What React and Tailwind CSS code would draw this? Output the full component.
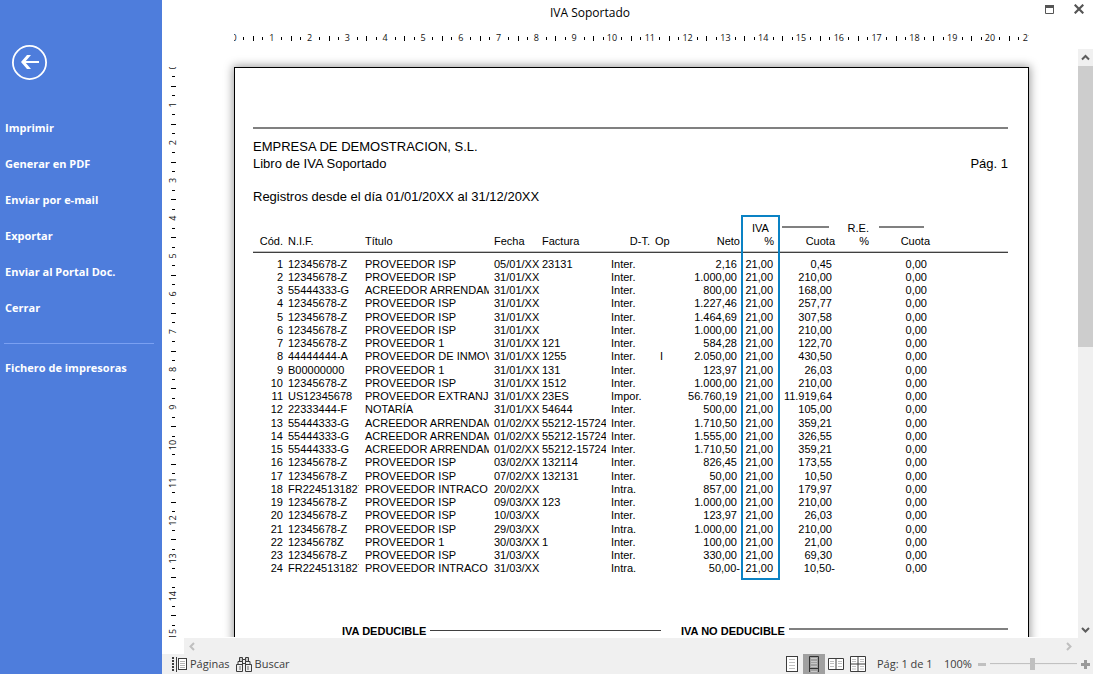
const MENU = ["Imprimir", "Generar en PDF", "Enviar por e-mail", "Exportar", "Enviar al Portal Doc.", "Cerrar"];

// cod, nif, titulo, fecha, factura, tipo, op, neto, iva, cuota, cuota R.E.
const ROWS = [
  ["1", "12345678-Z", "PROVEEDOR ISP", "05/01/XX", "23131", "Inter.", "", "2,16", "21,00", "0,45", "0,00"],
  ["2", "12345678-Z", "PROVEEDOR ISP", "31/01/XX", "", "Inter.", "", "1.000,00", "21,00", "210,00", "0,00"],
  ["3", "55444333-G", "ACREEDOR ARRENDAM", "31/01/XX", "", "Inter.", "", "800,00", "21,00", "168,00", "0,00"],
  ["4", "12345678-Z", "PROVEEDOR ISP", "31/01/XX", "", "Inter.", "", "1.227,46", "21,00", "257,77", "0,00"],
  ["5", "12345678-Z", "PROVEEDOR ISP", "31/01/XX", "", "Inter.", "", "1.464,69", "21,00", "307,58", "0,00"],
  ["6", "12345678-Z", "PROVEEDOR ISP", "31/01/XX", "", "Inter.", "", "1.000,00", "21,00", "210,00", "0,00"],
  ["7", "12345678-Z", "PROVEEDOR 1", "31/01/XX", "121", "Inter.", "", "584,28", "21,00", "122,70", "0,00"],
  ["8", "44444444-A", "PROVEEDOR DE INMOV", "31/01/XX", "1255", "Inter.", "I", "2.050,00", "21,00", "430,50", "0,00"],
  ["9", "B00000000", "PROVEEDOR 1", "31/01/XX", "131", "Inter.", "", "123,97", "21,00", "26,03", "0,00"],
  ["10", "12345678-Z", "PROVEEDOR ISP", "31/01/XX", "1512", "Inter.", "", "1.000,00", "21,00", "210,00", "0,00"],
  ["11", "US12345678", "PROVEEDOR EXTRANJ", "31/01/XX", "23ES", "Impor.", "", "56.760,19", "21,00", "11.919,64", "0,00"],
  ["12", "22333444-F", "NOTARÍA", "31/01/XX", "54644", "Inter.", "", "500,00", "21,00", "105,00", "0,00"],
  ["13", "55444333-G", "ACREEDOR ARRENDAM", "01/02/XX", "55212-15724", "Inter.", "", "1.710,50", "21,00", "359,21", "0,00"],
  ["14", "55444333-G", "ACREEDOR ARRENDAM", "01/02/XX", "55212-15724", "Inter.", "", "1.555,00", "21,00", "326,55", "0,00"],
  ["15", "55444333-G", "ACREEDOR ARRENDAM", "01/02/XX", "55212-15724", "Inter.", "", "1.710,50", "21,00", "359,21", "0,00"],
  ["16", "12345678-Z", "PROVEEDOR ISP", "03/02/XX", "132114", "Inter.", "", "826,45", "21,00", "173,55", "0,00"],
  ["17", "12345678-Z", "PROVEEDOR ISP", "07/02/XX", "132131", "Inter.", "", "50,00", "21,00", "10,50", "0,00"],
  ["18", "FR2245131827", "PROVEEDOR INTRACO", "20/02/XX", "", "Intra.", "", "857,00", "21,00", "179,97", "0,00"],
  ["19", "12345678-Z", "PROVEEDOR ISP", "09/03/XX", "123", "Inter.", "", "1.000,00", "21,00", "210,00", "0,00"],
  ["20", "12345678-Z", "PROVEEDOR ISP", "10/03/XX", "", "Inter.", "", "123,97", "21,00", "26,03", "0,00"],
  ["21", "12345678-Z", "PROVEEDOR ISP", "29/03/XX", "", "Intra.", "", "1.000,00", "21,00", "210,00", "0,00"],
  ["22", "12345678Z", "PROVEEDOR 1", "30/03/XX", "1", "Inter.", "", "100,00", "21,00", "21,00", "0,00"],
  ["23", "12345678-Z", "PROVEEDOR ISP", "31/03/XX", "", "Inter.", "", "330,00", "21,00", "69,30", "0,00"],
  ["24", "FR2245131827", "PROVEEDOR INTRACO", "31/03/XX", "", "Intra.", "", "50,00-", "21,00", "10,50-", "0,00"],
];

const CM = 37.8;

const HorizontalRuler = () => (
  <svg className="block h-4 w-full" aria-hidden="true">
    {Array.from({ length: 22 }, (_, n) => (
      <g key={n}>
        <text x={n * CM} y="11" textAnchor="middle" fontSize="9" fill="#111">{n}</text>
        {[1, 2, 3].map((q) => (
          <rect key={q} x={Math.round((n + q / 4) * CM)} y={q === 2 ? 6 : 7} width="1" height={q === 2 ? 5 : 3} fill="#000" />
        ))}
      </g>
    ))}
  </svg>
);

const VerticalRuler = () => (
  <svg className="block min-h-0 w-full flex-1" aria-hidden="true">
    {Array.from({ length: 16 }, (_, n) => (
      <g key={n}>
        <text transform={`translate(14 ${n * CM}) rotate(-90)`} textAnchor="middle" fontSize="9" fill="#111">{n}</text>
        {[1, 2, 3].map((q) => (
          <rect key={q} x={q === 2 ? 9 : 10} y={Math.round((n + q / 4) * CM)} width={q === 2 ? 5 : 3} height="1" fill="#000" />
        ))}
      </g>
    ))}
  </svg>
);

const Chevron = ({ d, color = "#5c5c5c" }) => (
  <svg className="block" width="9" height="9" viewBox="0 0 9 9" fill="none" stroke={color} strokeWidth="2" aria-hidden="true">
    <path d={d} />
  </svg>
);

const Sidebar = () => (
  <aside className="flex w-[162px] shrink-0 flex-col bg-[#4e7ddc] text-[11px] font-bold text-white">
    <button type="button" aria-label="Volver" className="mt-[45px] ml-3 size-[35px]">
      <svg width="35" height="35" viewBox="0 0 35 35" fill="none" stroke="#fff" aria-hidden="true">
        <circle cx="17.5" cy="17.5" r="16.6" strokeWidth="1.8" />
        <path d="M10.5 17H27" strokeWidth="2" />
        <path d="M9 17L15 10H19L13 17L19 24H15Z" fill="#fff" stroke="none" />
      </svg>
    </button>
    <nav className="mt-[30px] flex flex-col">
      {MENU.map((item) => (
        <button key={item} type="button" className="h-9 px-[5px] text-left">{item}</button>
      ))}
      <hr className="mx-1 mt-[17px] mr-2 mb-[6px] border-[#7aa0f2]" />
      <button type="button" className="h-9 px-[5px] text-left">Fichero de impresoras</button>
    </nav>
  </aside>
);

const Cell = ({ className = "", children }) => (
  <td className={`overflow-hidden p-0 whitespace-nowrap ${className}`}>{children}</td>
);

// a trailing minus hangs to the right of the digits
const netoPad = (value) => (value.endsWith("-") ? "pr-px" : "pr-1");
const cuotaPad = (value) => (value.endsWith("-") ? "pr-0" : "pr-[3px]");

const HEAD = "h-[18px] border-b border-[#404040] p-0 align-top font-normal whitespace-nowrap shadow-[inset_0_-1px_0_#c0c0c0]";

const Register = () => (
  <div className="relative mt-[17px]">
    <table className="w-full table-fixed border-separate border-spacing-0 text-[11px] leading-[13px]">
      <colgroup>
        <col className="w-[35px]" />
        <col className="w-[71px]" />
        <col className="w-[130px]" />
        <col className="w-[51px]" />
        <col className="w-[66px]" />
        <col className="w-[49px]" />
        <col className="w-[20px]" />
        <col className="w-[66px]" />
        <col className="w-[39px]" />
        <col className="w-[55px]" />
        <col className="w-[34px]" />
        <col className="w-[61px]" />
        <col />
      </colgroup>
      <thead>
        <tr className="h-[13px]">
          <td colSpan={8} className="p-0" />
          <th className="p-0 font-normal">IVA</th>
          <td className="p-0 align-top"><div className="mt-1 mr-[6px] ml-[2px] h-[2px] bg-[#808080]" /></td>
          <th className="p-0 text-right font-normal">R.E.</th>
          <td className="p-0 align-top"><div className="mt-1 mr-[6px] ml-[10px] h-[2px] bg-[#808080]" /></td>
          <td className="p-0" />
        </tr>
        <tr>
          <th className={`${HEAD} pr-[5px] text-right`}>Cód.</th>
          <th className={`${HEAD} text-left`}>N.I.F.</th>
          <th className={`${HEAD} pl-[6px] text-left`}>Título</th>
          <th className={`${HEAD} pl-[5px] text-left`}>Fecha</th>
          <th className={`${HEAD} pl-[2px] text-left`}>Factura</th>
          <th className={`${HEAD} pr-[5px] text-right`}>D-T.</th>
          <th className={`${HEAD} text-left`}>Op</th>
          <th className={`${HEAD} pr-px text-right`}>Neto</th>
          <th className={`${HEAD} pr-[6px] text-right`}>%</th>
          <th className={`${HEAD} text-right`}>Cuota</th>
          <th className={`${HEAD} text-right`}>%</th>
          <th className={`${HEAD} text-right`}>Cuota</th>
          <td className={HEAD} />
        </tr>
      </thead>
      <tbody className="before:block before:h-[5px]">
        {ROWS.map(([cod, nif, titulo, fecha, factura, tipo, op, neto, iva, cuota, re]) => (
          <tr key={cod} className="h-[13px] nth-[4n]:h-[14px]">
            <Cell className="pr-[5px] text-right align-top">{cod}</Cell>
            <Cell className="align-top">{nif}</Cell>
            <Cell className="pl-[6px] align-top">{titulo}</Cell>
            <Cell className="pl-[5px] align-top">{fecha}</Cell>
            <Cell className="pl-[2px] align-top">{factura}</Cell>
            <Cell className="pl-[5px] align-top">{tipo}</Cell>
            <Cell className="pl-[5px] align-top">{op}</Cell>
            <Cell className={`text-right align-top ${netoPad(neto)}`}>{neto}</Cell>
            <Cell className="pr-[7px] text-right align-top">{iva}</Cell>
            <Cell className={`text-right align-top ${cuotaPad(cuota)}`}>{cuota}</Cell>
            <Cell />
            <Cell className="pr-[3px] text-right align-top">{re}</Cell>
            <Cell />
          </tr>
        ))}
      </tbody>
    </table>
    <div className="pointer-events-none absolute -top-[7px] -bottom-1 left-[488px] w-[39px] border-2 border-[#0a82c4]" />
  </div>
);

const Page = () => (
  <article className="mr-[49px] ml-[50px] h-[1123px] border border-black bg-white pt-[59px] pr-5 pl-[18px] font-['Liberation_Sans',Arial,sans-serif] text-black shadow-[0_0_9px_1px_rgba(0,0,0,0.4)]">
    <div className="h-[2px] bg-[#808080]" />
    <div className="mt-[9px] text-[13px] leading-[17px]">
      <p>EMPRESA DE DEMOSTRACION, S.L.</p>
      <div className="flex justify-between">
        <p>Libro de IVA Soportado</p>
        <p>Pág. 1</p>
      </div>
      <p className="mt-4">Registros desde el día 01/01/20XX al 31/12/20XX</p>
    </div>
    <Register />
    <div className="mt-[49px] flex gap-5 text-[11px] leading-[13px] font-bold">
      <div className="flex w-[408px] gap-1 pl-[89px]">
        <h2>IVA DEDUCIBLE</h2>
        <div className="mt-[5px] h-px flex-1 bg-[#404040]" />
      </div>
      <div className="flex flex-1 gap-1">
        <h2>IVA NO DEDUCIBLE</h2>
        <div className="mt-[3px] h-[2px] flex-1 bg-[#808080]" />
      </div>
    </div>
  </article>
);

const PagesIcon = () => (
  <svg width="15" height="16" viewBox="0 0 15 16" aria-hidden="true">
    <path d="M1 1V16" stroke="#3c3c3c" strokeWidth="2" strokeDasharray="2 1" />
    <path d="M4.5 1V16" stroke="#3c3c3c" />
    <rect x="6.5" y="2.5" width="8" height="11" fill="#fff" stroke="#3c3c3c" />
    <path d="M8 5.5H13M8 7.5H13M8 9.5H13M8 11.5H13" stroke="#b5b5b5" />
  </svg>
);

const BinocularsIcon = () => (
  <svg width="16" height="16" viewBox="0 0 16 16" fill="#c8c8c8" stroke="#3c3c3c" aria-hidden="true">
    <path d="M3.5 1.5H6.5V5.5H3.5ZM9.5 1.5H12.5V5.5H9.5Z" />
    <path d="M6.5 3.5H9.5V7.5H6.5Z" fill="#f0f0f0" />
    <path d="M0.5 8.5H2V5.5H6.5V15.5H0.5ZM9.5 5.5H14V8.5H15.5V15.5H9.5Z" fill="#f0f0f0" />
    <path d="M3 10H5V14H3ZM11 10H13V14H11Z" stroke="none" fill="#b0b0b0" />
    <path d="M2 8.5H6M10 8.5H14" />
  </svg>
);

const ViewSingle = () => (
  <svg width="12" height="16" viewBox="0 0 12 16" fill="none" aria-hidden="true">
    <rect x="0.5" y="0.5" width="11" height="15" fill="#fff" stroke="#3c3c3c" />
    <path d="M3 3.5H9M3 6.5H9M3 9.5H9M3 12.5H9" stroke="#c0c0c0" />
  </svg>
);

const ViewContinuous = () => (
  <svg width="10" height="16" viewBox="0 0 10 16" fill="none" aria-hidden="true">
    <path d="M0.5 16V0.5H9.5V16M0 12.5H10" stroke="#333" />
    <path d="M2 2.5H8M2 5.5H8M2 7.5H8M2 10.5H8M2 15.5H8" stroke="#c8c8c8" />
  </svg>
);

const ViewFacing = () => (
  <svg width="16" height="12" viewBox="0 0 16 12" fill="none" aria-hidden="true">
    <path d="M0.5 0.5H15.5V11.5H0.5ZM8 0.5V11.5" fill="#fff" stroke="#3c3c3c" />
    <path d="M2 3.5H6M2 5.5H6M2 8.5H6M10 3.5H14M10 5.5H14M10 8.5H14" stroke="#c0c0c0" />
  </svg>
);

const ViewGrid = () => (
  <svg width="16" height="16" viewBox="0 0 16 16" fill="none" aria-hidden="true">
    <path d="M0.5 0.5H15.5V15.5H0.5ZM8 0.5V15.5M0.5 8H15.5" fill="#fff" stroke="#3c3c3c" />
    <path d="M2 3.5H6M2 5.5H6M10 3.5H14M10 5.5H14M2 10.5H6M2 13H6M10 10.5H14M10 13H14" stroke="#c0c0c0" />
  </svg>
);

const StatusBar = () => (
  <footer className="flex h-5 shrink-0 items-center bg-[#f0f0f0] pr-[3px] pl-[10px] text-[11px] text-[#3c3c3c]">
    <button type="button" className="flex items-center gap-[3px]"><PagesIcon />Páginas</button>
    <button type="button" className="ml-[6px] flex items-center gap-[3px]"><BinocularsIcon />Buscar</button>
    <div className="ml-auto flex h-5 items-center">
      <button type="button" aria-label="Una página" className="mr-[5px]"><ViewSingle /></button>
      <button type="button" aria-label="Continuo" aria-pressed="true" className="flex h-5 w-[22px] items-center justify-center bg-[#a0a0a0]"><ViewContinuous /></button>
      <button type="button" aria-label="Dos páginas" className="ml-[3px]"><ViewFacing /></button>
      <button type="button" aria-label="Cuatro páginas" className="ml-[6px]"><ViewGrid /></button>
    </div>
    <span className="ml-[11px] w-[67px]">Pág: 1 de 1</span>
    <span className="w-[34px]">100%</span>
    <button type="button" aria-label="Alejar" className="h-[3px] w-2 bg-[#c0c0c0]" />
    <input
      type="range"
      aria-label="Zoom"
      defaultValue={49}
      className="mx-1 h-3 w-[87px] appearance-none bg-linear-to-b from-transparent from-45% via-[#bdbdbd] via-45% to-transparent to-55% [&::-webkit-slider-thumb]:h-3 [&::-webkit-slider-thumb]:w-[5px] [&::-webkit-slider-thumb]:appearance-none [&::-webkit-slider-thumb]:bg-[#c0c0c0]"
    />
    <button type="button" aria-label="Acercar">
      <svg width="9" height="9" viewBox="0 0 9 9" stroke="#9a9a9a" strokeWidth="3" aria-hidden="true"><path d="M4.5 0V9M0 4.5H9" /></svg>
    </button>
  </footer>
);

export default function App() {
  return (
    <div className="flex h-screen overflow-hidden bg-white font-['Open_Sans','Noto_Sans',sans-serif] text-[#222]">
      <Sidebar />
      <main className="flex min-w-0 flex-1 flex-col">
        <header className="flex h-[26px] shrink-0 items-center">
          <h1 className="flex-1 text-center text-xs text-black">IVA Soportado</h1>
          <div className="flex w-[75px] items-center justify-end gap-5 pr-[9px] pb-2">
            <button type="button" aria-label="Maximizar">
              <svg width="9" height="9" viewBox="0 0 9 9" aria-hidden="true"><path d="M0.5 0.5H8.5V8.5H0.5Z" fill="none" stroke="#555" /><path d="M0 0H9V3H0Z" fill="#555" /></svg>
            </button>
            <button type="button" aria-label="Cerrar ventana">
              <svg width="10" height="10" viewBox="0 0 10 10" stroke="#555" strokeWidth="2.2" aria-hidden="true"><path d="M0.7 0.7L9.3 9.3M9.3 0.7L0.7 9.3" /></svg>
            </button>
          </div>
        </header>
        <div className="h-[23px] shrink-0 pt-1 pr-16 pl-[72px]"><HorizontalRuler /></div>
        <div className="flex min-h-0 flex-1">
          <div className="flex w-[22px] shrink-0 flex-col pt-[18px] pb-[17px]"><VerticalRuler /></div>
          <div className="flex min-w-0 flex-1 flex-col">
            <div className="flex min-h-0 flex-1">
              <div className="mb-px min-w-0 flex-1 overflow-hidden pt-[18px]"><Page /></div>
              <div className="flex w-[15px] shrink-0 flex-col bg-[#f0f0f0]">
                <button type="button" aria-label="Subir" className="flex h-[17px] items-center justify-center"><Chevron d="M1 6.5L4.5 3L8 6.5" /></button>
                <div className="h-[281px] bg-[#cdcdcd]" />
                <button type="button" aria-label="Bajar" className="mt-auto flex h-[17px] items-center justify-center"><Chevron d="M1 3L4.5 6.5L8 3" /></button>
              </div>
            </div>
            <div className="flex h-4 shrink-0 items-center justify-between bg-[#f0f0f0] pr-5 pl-1">
              <button type="button" aria-label="Izquierda"><Chevron d="M6 1L2.5 4.5L6 8" color="#bfbfbf" /></button>
              <button type="button" aria-label="Derecha"><Chevron d="M3 1L6.5 4.5L3 8" color="#bfbfbf" /></button>
            </div>
          </div>
        </div>
        <StatusBar />
      </main>
    </div>
  );
}
